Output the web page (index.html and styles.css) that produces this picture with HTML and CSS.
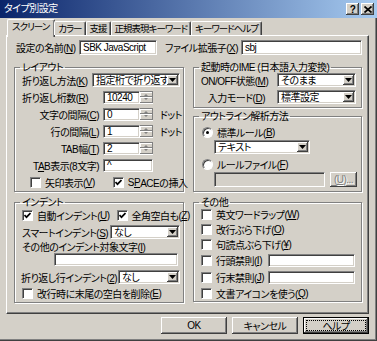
FILE: index.html
```html
<!DOCTYPE html>
<html lang="ja">

<head>
    <meta charset="UTF-8">
    <meta name="viewport" content="width=device-width, initial-scale=1.0">
    <link rel="stylesheet" href="styles.css">
    <title>タイプ別設定</title>
</head>

<body>
    <div class="window">
        <div class="titlebar">
            <span class="title">タイプ別設定</span>
            <div class="caption">
                <span class="cbtn">?</span>
                <span class="cbtn"><svg width="8" height="7" viewBox="0 0 8 7"><path d="M0.5 0.5 L7.5 6.5 M7.5 0.5 L0.5 6.5" stroke="#000" stroke-width="1.7" fill="none"/></svg></span>
            </div>
        </div>

        <div class="body">
            <div class="tabs">
                <span class="tab active">スクリーン</span>
                <span class="tab">カラー</span>
                <span class="tab">支援</span>
                <span class="tab">正規表現キーワード</span>
                <span class="tab">キーワードヘルプ</span>
            </div>

            <div class="panel">
                <div class="namerow">
                    <span class="lbl-name">設定の名前(<u>N</u>)</span>
                    <span class="field name-field">SBK JavaScript</span>
                    <span class="lbl-ext">ファイル拡張子(<u>X</u>)</span>
                    <span class="field ext-field">sbj</span>
                </div>

                <div class="columns">
                    <div class="col left">
                        <fieldset class="group layout">
                            <legend>レイアウト</legend>
                            <div class="row">
                                <span class="lbl lbl-wrap">折り返し方法(<u>K</u>)</span>
                                <span class="combo combo-wrap"><span class="val">指定桁で折り返す</span><span class="drop"><svg width="7" height="4" viewBox="0 0 7 4"><polygon points="0,0 7,0 3.5,4" fill="#000"/></svg></span></span>
                            </div>
                            <div class="row">
                                <span class="lbl lbl-spin">折り返し桁数(<u>R</u>)</span>
                                <span class="spin"><span class="field">10240</span><span class="updown"><span class="up"></span><span class="down"></span></span></span>
                            </div>
                            <div class="row">
                                <span class="lbl lbl-spin right">文字の間隔(<u>C</u>)</span>
                                <span class="spin"><span class="field">0</span><span class="updown"><span class="up"></span><span class="down"></span></span></span>
                                <span class="unit">ドット</span>
                            </div>
                            <div class="row">
                                <span class="lbl lbl-spin right">行の間隔(<u>L</u>)</span>
                                <span class="spin"><span class="field">1</span><span class="updown"><span class="up"></span><span class="down"></span></span></span>
                                <span class="unit">ドット</span>
                            </div>
                            <div class="row">
                                <span class="lbl lbl-spin right">TAB幅(<u>T</u>)</span>
                                <span class="spin"><span class="field">2</span><span class="updown"><span class="up"></span><span class="down"></span></span></span>
                            </div>
                            <div class="row">
                                <span class="lbl lbl-spin right">T<u>A</u>B表示(8文字)</span>
                                <span class="field tabshow">^</span>
                            </div>
                            <div class="row checks">
                                <span class="check"><span class="cb"></span>矢印表示(<u>V</u>)</span>
                                <span class="check space"><span class="cb on"><svg width="7" height="7" viewBox="0 0 7 7"><polyline points="0.5,3 2.5,5.2 6.5,1" fill="none" stroke="#000" stroke-width="1.7"/></svg></span>S<u>P</u>ACEの挿入</span>
                            </div>
                        </fieldset>

                        <fieldset class="group indent">
                            <legend>インデント</legend>
                            <div class="row r-auto">
                                <span class="check"><span class="cb on"><svg width="7" height="7" viewBox="0 0 7 7"><polyline points="0.5,3 2.5,5.2 6.5,1" fill="none" stroke="#000" stroke-width="1.7"/></svg></span>自動インデント(<u>U</u>)</span>
                                <span class="check zenkaku"><span class="cb on"><svg width="7" height="7" viewBox="0 0 7 7"><polyline points="0.5,3 2.5,5.2 6.5,1" fill="none" stroke="#000" stroke-width="1.7"/></svg></span>全角空白も(<u>Z</u>)</span>
                            </div>
                            <div class="row r-smart">
                                <span class="lbl lbl-smart">スマートインデント(<u>S</u>)</span>
                                <span class="combo combo-smart"><span class="val">なし</span><span class="drop"><svg width="7" height="4" viewBox="0 0 7 4"><polygon points="0,0 7,0 3.5,4" fill="#000"/></svg></span></span>
                            </div>
                            <div class="row r-other">
                                <span class="lbl">その他のインデント対象文字(<u>I</u>)</span>
                            </div>
                            <div class="row r-otherfield">
                                <span class="field other-field"></span>
                            </div>
                            <div class="row r-wrapindent">
                                <span class="lbl lbl-wrapindent">折り返し行インデント(<u>2</u>)</span>
                                <span class="combo combo-wrapindent"><span class="val">なし</span><span class="drop"><svg width="7" height="4" viewBox="0 0 7 4"><polygon points="0,0 7,0 3.5,4" fill="#000"/></svg></span></span>
                            </div>
                            <div class="row r-trim">
                                <span class="check"><span class="cb"></span>改行時に末尾の空白を削除(<u>E</u>)</span>
                            </div>
                        </fieldset>
                    </div>

                    <div class="col right">
                        <fieldset class="group ime">
                            <legend>起動時のIME (日本語入力変換)</legend>
                            <div class="row">
                                <span class="lbl lbl-ime">ON/OFF状態(<u>M</u>)</span>
                                <span class="combo combo-ime"><span class="val">そのまま</span><span class="drop"><svg width="7" height="4" viewBox="0 0 7 4"><polygon points="0,0 7,0 3.5,4" fill="#000"/></svg></span></span>
                            </div>
                            <div class="row">
                                <span class="lbl lbl-ime">入力モード(<u>D</u>)</span>
                                <span class="combo combo-ime"><span class="val">標準設定</span><span class="drop"><svg width="7" height="4" viewBox="0 0 7 4"><polygon points="0,0 7,0 3.5,4" fill="#000"/></svg></span></span>
                            </div>
                        </fieldset>

                        <fieldset class="group outline">
                            <legend>アウトライン解析方法</legend>
                            <div class="row r-std">
                                <span class="check"><span class="rb on"></span>標準ルール(<u>B</u>)</span>
                            </div>
                            <div class="row r-rule">
                                <span class="combo combo-rule"><span class="val">テキスト</span><span class="drop"><svg width="7" height="4" viewBox="0 0 7 4"><polygon points="0,0 7,0 3.5,4" fill="#000"/></svg></span></span>
                            </div>
                            <div class="row r-file">
                                <span class="check"><span class="rb"></span>ルールファイル(<u>F</u>)</span>
                            </div>
                            <div class="row r-filefield">
                                <span class="field disabled file-field"></span>
                                <span class="btn disabled small">(<u>U</u>)...</span>
                            </div>
                        </fieldset>

                        <fieldset class="group other">
                            <legend>その他</legend>
                            <div class="row">
                                <span class="check"><span class="cb"></span>英文ワードラップ(<u>W</u>)</span>
                            </div>
                            <div class="row">
                                <span class="check"><span class="cb"></span>改行ぶら下げ(<u>O</u>)</span>
                            </div>
                            <div class="row">
                                <span class="check"><span class="cb"></span>句読点ぶら下げ(<u>¥</u>)</span>
                            </div>
                            <div class="row tall">
                                <span class="check kinsoku"><span class="cb"></span>行頭禁則(<u>I</u>)</span>
                                <span class="field kinsoku-field"></span>
                            </div>
                            <div class="row tall">
                                <span class="check kinsoku"><span class="cb"></span>行末禁則(<u>J</u>)</span>
                                <span class="field kinsoku-field"></span>
                            </div>
                            <div class="row">
                                <span class="check"><span class="cb"></span>文書アイコンを使う(<u>Q</u>)</span>
                            </div>
                        </fieldset>
                    </div>
                </div>
            </div>

            <div class="buttons">
                <span class="btn">OK</span>
                <span class="btn">キャンセル</span>
                <span class="btn default"><span class="focus">ヘルプ</span></span>
            </div>
        </div>
    </div>
</body>

</html>
```

FILE: styles.css
```css
* {
    box-sizing: border-box;
}

body {
    margin: 0;
    background-color: #d4d0c8;
    font-family: "Liberation Sans", "Noto Sans CJK JP", sans-serif;
    font-size: 10px;
    letter-spacing: -0.5px;
    font-feature-settings: "palt";
    color: #000;
    white-space: nowrap;
}

u {
    text-decoration-thickness: 1px;
    text-underline-offset: 1px;
}

.window {
    width: 377px;
    height: 341px;
    background-color: #d4d0c8;
    box-shadow: inset -1px -1px 0 #404040, inset -2px -2px 0 #808080;
}

/* title bar */

.titlebar {
    height: 18px;
    display: flex;
    align-items: center;
    justify-content: space-between;
    padding: 0 3px 0 4px;
    background: linear-gradient(to right, #0a246a, #a6caf0);
}

.title {
    color: white;
    line-height: 1;
}

.caption {
    display: flex;
    gap: 2px;
}

.cbtn {
    width: 13px;
    height: 12px;
    display: flex;
    align-items: center;
    justify-content: center;
    background-color: #d4d0c8;
    font: bold 10px "Liberation Sans", sans-serif;
    box-shadow: inset -1px -1px 0 #404040, inset 1px 1px 0 #fff, inset -2px -2px 0 #808080;
}

/* body */

.body {
    padding: 1px 8px 0 6px;
}

.tabs {
    display: flex;
    align-items: flex-end;
    height: 16px;
    padding-left: 1px;
    position: relative;
    z-index: 1;
}

.tab {
    height: 14px;
    line-height: 13px;
    padding: 0 3px;
    font-size: 9.5px;
    letter-spacing: -1px;
    border-top: 1px solid #fff;
    border-left: 1px solid #fff;
    border-right: 1px solid #404040;
    border-radius: 2px 2px 0 0;
    box-shadow: inset -1px 0 0 #808080;
    background-color: #d4d0c8;
}

.tab.active {
    height: 18px;
    margin-bottom: -2px;
    margin-right: -1px;
    padding: 0 5px 3px 4px;
    line-height: 14px;
}

.panel {
    height: 279px;
    padding: 4px 5px 0 7px;
    border-top: 1px solid #fff;
    border-left: 1px solid #fff;
    border-right: 1px solid #404040;
    border-bottom: 1px solid #404040;
    box-shadow: inset -1px -1px 0 #808080;
}

/* controls */

.field {
    display: block;
    height: 13px;
    padding: 0 3px;
    line-height: 11px;
    background-color: #fff;
    border: 1px solid;
    border-color: #808080 #fff #fff #808080;
    box-shadow: inset 1px 1px 0 #404040, inset -1px -1px 0 #d4d0c8;
    overflow: hidden;
}

.field.disabled {
    background-color: #d4d0c8;
}

.combo {
    display: flex;
    height: 14px;
    padding: 2px;
    background-color: #fff;
    border: 1px solid;
    border-color: #808080 #fff #fff #808080;
    box-shadow: inset 1px 1px 0 #404040, inset -1px -1px 0 #d4d0c8;
}

.combo .val {
    flex: 1;
    min-width: 0;
    line-height: 10px;
    padding-left: 1px;
}

.drop {
    width: 11px;
    flex-shrink: 0;
    margin: -1px -1px -1px 0;
    display: flex;
    align-items: center;
    justify-content: center;
    background-color: #d4d0c8;
    box-shadow: inset -1px -1px 0 #404040, inset 1px 1px 0 #fff, inset -2px -2px 0 #808080;
    position: relative;
}

.spin {
    display: flex;
}

.spin .field {
    width: 37px;
}

.updown {
    width: 13px;
    height: 13px;
    display: flex;
    flex-direction: column;
    border-top: 1px solid #808080;
    border-bottom: 1px solid #fff;
}

.updown span {
    flex: 1;
    position: relative;
    background-color: #d4d0c8;
    box-shadow: inset -1px -1px 0 #808080, inset 1px 1px 0 #fff;
}

.updown span::after {
    content: "";
    position: absolute;
    left: 4px;
    top: 2px;
    border-left: 2px solid transparent;
    border-right: 2px solid transparent;
}

.updown .up::after {
    border-bottom: 2px solid #808080;
}

.updown .down::after {
    top: 1px;
    border-top: 2px solid #808080;
}

.cb {
    width: 11px;
    height: 11px;
    flex-shrink: 0;
    display: flex;
    align-items: center;
    justify-content: center;
    margin-right: 4px;
    background-color: #fff;
    border: 1px solid;
    border-color: #808080 #fff #fff #808080;
    box-shadow: inset 1px 1px 0 #404040;
}

.rb {
    width: 11px;
    height: 11px;
    flex-shrink: 0;
    margin-right: 4px;
    border-radius: 50%;
    background-color: #fff;
    border: 1px solid;
    border-color: #808080 #fff #fff #808080;
    box-shadow: inset 1px 1px 0 #404040;
    position: relative;
}

.rb.on::after {
    content: "";
    position: absolute;
    left: 3px;
    top: 3px;
    width: 3px;
    height: 3px;
    border-radius: 50%;
    background-color: #000;
}

.check {
    display: flex;
    align-items: center;
}

.btn {
    display: flex;
    align-items: center;
    justify-content: center;
    background-color: #d4d0c8;
    box-shadow: inset -1px -1px 0 #404040, inset 1px 1px 0 #fff, inset -2px -2px 0 #808080;
}

.btn.disabled {
    color: #808080;
    text-shadow: 1px 1px 0 #fff;
}

/* name row */

.namerow {
    display: flex;
    align-items: center;
    height: 15px;
    padding-left: 2px;
}

.namerow .field {
    height: 15px;
    line-height: 13px;
}

.lbl-name {
    width: 63px;
}

.name-field {
    width: 78px;
}

.lbl-ext {
    width: 76px;
    margin-left: 8px;
}

.ext-field {
    width: 121px;
}

/* columns and groups */

.columns {
    display: flex;
    gap: 9px;
    margin-top: 7px;
}

.col {
    display: flex;
    flex-direction: column;
}

.col.left {
    width: 170px;
}

.col.right {
    width: 169px;
}

.group {
    margin: 0;
    padding: 0 0 2px 0;
    min-width: 0;
    border: 1px solid #808080;
    box-shadow: inset 1px 1px 0 #fff, 1px 1px 0 #fff;
}

.group legend {
    margin-left: 5px;
    padding: 0 2px;
    height: 11px;
    line-height: 11px;
}

.row {
    display: flex;
    align-items: center;
    height: 14px;
    padding-left: 7px;
}

.layout .row + .row {
    margin-top: 3px;
}

.lbl-wrap {
    width: 70px;
}

.combo-wrap {
    width: 88px;
}

.lbl-spin {
    width: 77px;
    margin-right: 4px;
}

.lbl-spin.right {
    text-align: right;
}

.unit {
    margin-left: 7px;
}

.tabshow {
    width: 50px;
}

.checks {
    padding-left: 15px;
}

.check.space {
    margin-left: 18px;
}

/* indent */

.indent {
    margin-top: 5px;
}

.r-smart {
    margin-top: 3px;
}

.lbl-smart {
    width: 88px;
}

.combo-smart {
    width: 70px;
}

.r-other {
    height: 12px;
    margin-top: 1px;
}

.r-otherfield {
    height: 13px;
    margin-top: 1px;
    padding-left: 39px;
}

.other-field {
    width: 124px;
}

.r-wrapindent {
    margin-top: 4px;
    padding-left: 6px;
}

.lbl-wrapindent {
    width: 97px;
}

.combo-wrapindent {
    width: 62px;
}

.r-trim {
    margin-top: 2px;
}

.zenkaku {
    margin-left: 7px;
}

/* ime */

.ime .row + .row {
    margin-top: 3px;
}

.ime {
    padding-bottom: 3px;
}

.lbl-ime {
    width: 64px;
    text-align: right;
    margin-right: 12px;
}

.combo-ime {
    width: 79px;
}

/* outline */

.outline {
    margin-top: 3px;
    padding-bottom: 4px;
}

.r-std {
    margin-top: 3px;
    padding-left: 8px;
}

.r-rule {
    margin-top: 1px;
    padding-left: 20px;
}

.combo-rule {
    width: 96px;
}

.r-file {
    margin-top: 3px;
    padding-left: 8px;
}

.r-filefield {
    height: 15px;
    margin-top: 1px;
    padding-left: 20px;
}

.file-field {
    width: 111px;
    height: 15px;
}

.btn.small {
    width: 27px;
    height: 15px;
    margin-left: 5px;
}

/* other */

.other {
    margin-top: 5px;
    padding-bottom: 1px;
}

.other .row {
    height: 13px;
    margin-top: 2px;
}

.other .row:first-of-type {
    margin-top: 0;
}

.other .row.tall {
    height: 15px;
}

.kinsoku {
    width: 67px;
}

.kinsoku-field {
    width: 87px;
}

/* buttons */

.buttons {
    display: flex;
    justify-content: flex-end;
    gap: 5px;
    margin-top: 3px;
}

.buttons .btn {
    width: 66px;
    height: 17px;
}

.btn.default {
    border: 1px solid #000;
    padding: 3px;
}

.focus {
    width: 100%;
    height: 100%;
    display: flex;
    align-items: center;
    justify-content: center;
    outline: 1px dotted #000;
}
```
